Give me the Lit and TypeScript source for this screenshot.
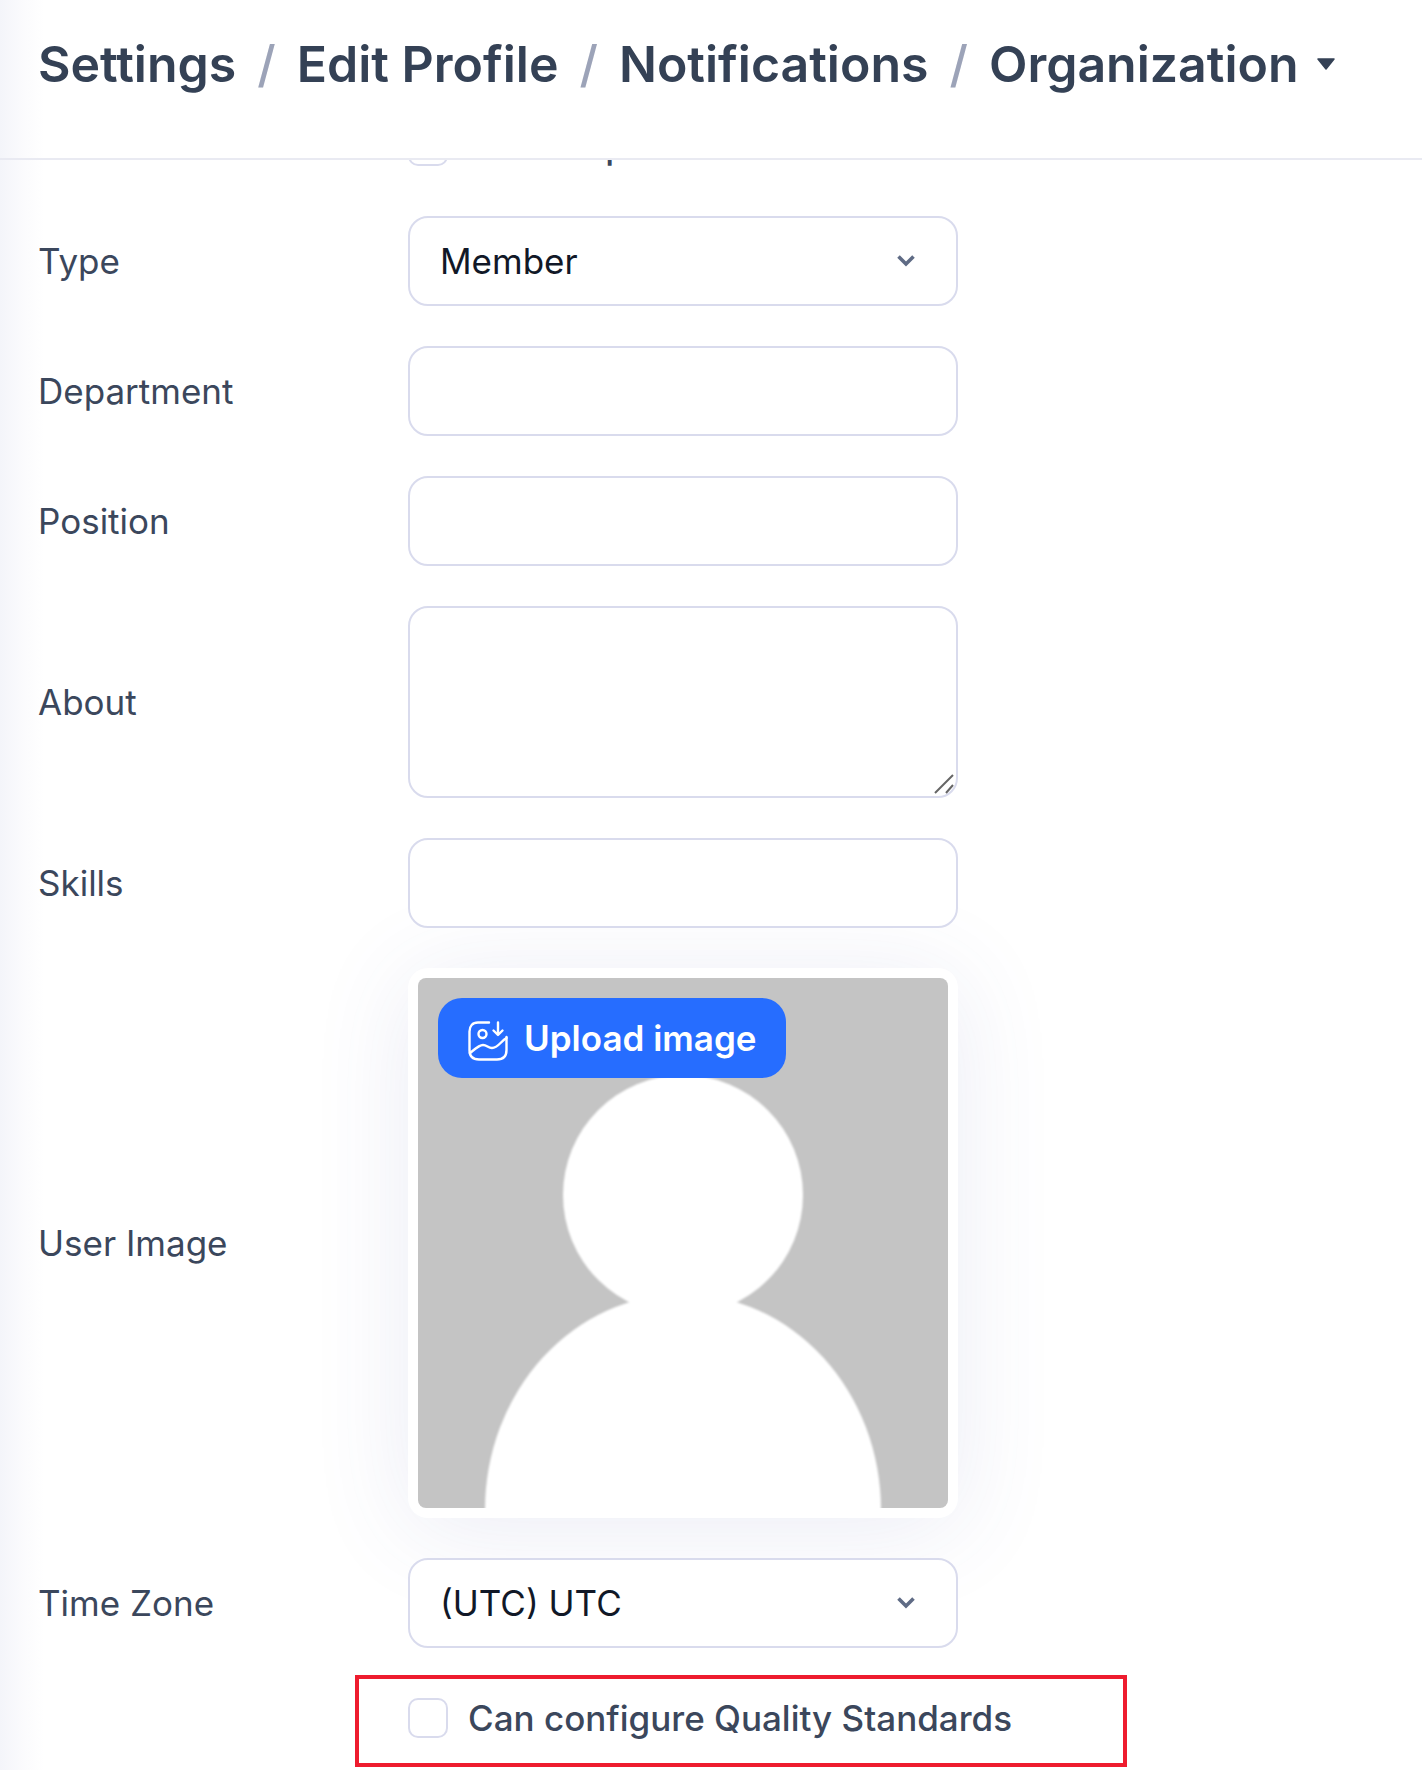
import { LitElement, html, css } from "lit";
import { customElement } from "lit/decorators.js";

const chevron = html`<svg class="chev" width="20" height="13" viewBox="0 0 20 13"><path d="M2.500 2.500l7.500 7.500 7.500-7.500" fill="none" stroke="#5f6b85" stroke-width="3.6"/></svg>`;

@customElement("app-root")
export class AppRoot extends LitElement {
  static styles = css`
    :host {
      display: block;
      height: 1770px;
      overflow: hidden;
      background: linear-gradient(90deg, #f4f5fa 0, #fbfbfd 24px, #fff 44px);
      font-family: Inter, "Liberation Sans", sans-serif;
      color: #374357;
      position: relative;
    }
    * { box-sizing: border-box; }
    header {
      height: 160px;
      border-bottom: 2px solid #e9eaf2;
      padding: 0 0 30px 38px;
      display: flex;
      align-items: center;
      gap: 21px;
      font-size: 50px;
      font-weight: 600;
      line-height: 1;
      color: #344155;
    }
    .sep { color: #9ca3b8; font-weight: 500; }
    .caret { margin-left: -3px; }
    .scroller { height: 1610px; overflow: hidden; position: relative; }
    form {
      margin-top: -44px;
      padding-left: 38px;
      display: grid;
      grid-template-columns: 370px 550px;
      row-gap: 40px;
      align-items: center;
      font-size: 35px;
    }
    .lbl { color: #3b475c; }
    .ctl { position: relative; display: block; }
    input.t, select, textarea {
      display: block;
      width: 100%;
      height: 90px;
      border: 2px solid #d9dbed;
      border-radius: 20px;
      background: #fff;
      font: inherit;
      color: #111827;
      padding: 0 30px;
      outline: none;
      appearance: none;
      margin: 0;
    }
    textarea { height: 192px; resize: none; padding: 20px 30px; }
    .chev { position: absolute; right: 42px; top: 38px; }
    .grip { position: absolute; left: 526px; top: 168px; }
    .check {
      grid-column: 2;
      height: 60px;
      display: flex;
      align-items: center;
      gap: 20px;
      white-space: nowrap;
      font-weight: 500;
      color: #3b475c;
    }
    .clipped span { word-spacing: 6px; }
    .box {
      width: 40px;
      height: 40px;
      flex: none;
      border: 2px solid #d9dbed;
      border-radius: 10px;
      background: #fff;
      appearance: none;
      margin: 0;
    }
    .card {
      height: 550px;
      padding: 10px;
      background: #fff;
      border-radius: 20px;
      box-shadow: 0 10px 100px rgba(70, 85, 160, 0.11);
    }
    .pic {
      position: relative;
      width: 530px;
      height: 530px;
      background: #c4c4c4;
      border-radius: 8px;
      overflow: hidden;
    }
    .pic svg.sil { display: block; filter: blur(0.8px); }
    .upload {
      position: absolute;
      left: 20px;
      top: 20px;
      height: 80px;
      width: 348px;
      border: 0;
      border-radius: 24px;
      background: #266dff;
      color: #fff;
      font: inherit;
      font-size: 35px;
      font-weight: 600;
      display: flex;
      align-items: center;
      gap: 16px;
      padding: 0 30px;
      white-space: nowrap;
    }
    .upload svg { flex: none; margin-top: 6px; }
    .red {
      position: absolute;
      left: 355px;
      top: 1515px;
      width: 772px;
      height: 92px;
      border: 4px solid #ee1c2e;
      pointer-events: none;
    }
  `;

  render() {
    return html`
      <header>
        <span>Settings</span><span class="sep">/</span>
        <span>Edit Profile</span><span class="sep">/</span>
        <span>Notifications</span><span class="sep">/</span>
        <span>Organization</span>
        <svg class="caret" width="18" height="12" viewBox="0 0 18 12"><path d="M1 1h16L9 11z" fill="#344155" stroke="#344155" stroke-width="1.500" stroke-linejoin="round"/></svg>
      </header>
      <div class="scroller">
        <form>
          <label class="check clipped"><input class="box" type="checkbox" /><span>Can Help</span></label>

          <label class="lbl">Type</label>
          <div class="ctl"><select><option>Member</option></select>${chevron}</div>

          <label class="lbl">Department</label>
          <div class="ctl"><input class="t" type="text" /></div>

          <label class="lbl">Position</label>
          <div class="ctl"><input class="t" type="text" /></div>

          <label class="lbl">About</label>
          <div class="ctl">
            <textarea></textarea>
            <svg class="grip" width="20" height="20" viewBox="0 0 20 20"><path d="M1 19L19 1M12 19l7-8" fill="none" stroke="#666" stroke-width="2"/></svg>
          </div>

          <label class="lbl">Skills</label>
          <div class="ctl"><input class="t" type="text" /></div>

          <label class="lbl">User Image</label>
          <div class="card">
            <div class="pic">
              <svg class="sil" width="530" height="560" viewBox="0 0 530 560">
                <circle cx="265" cy="217" r="120" fill="#fff" />
                <ellipse cx="265" cy="532" rx="198" ry="216" fill="#fff" />
                <rect x="228" y="300" width="74" height="40" fill="#fff" />
              </svg>
              <button class="upload" type="button">
                <svg width="40" height="40" viewBox="0 0 40 40" fill="none" stroke="#fff" stroke-width="2.400" stroke-linecap="round" stroke-linejoin="round">
                  <path d="M21 1.500H10C4.500 1.500 1.500 5 1.500 10.500V29C1.500 35 5 38.500 11 38.500H29C35 38.500 38.500 35 38.500 29V16" />
                  <circle cx="14.500" cy="13" r="4" />
                  <path d="M30 1.500V13.500M25.500 9.500L30 14L34.500 9.500" />
                  <path d="M2 32C7 28 11 24 15 24C19 24 20 27 24 27C30 27 33 20 38.500 17" />
                </svg>
                <span>Upload image</span>
              </button>
            </div>
          </div>

          <label class="lbl">Time Zone</label>
          <div class="ctl"><select><option>(UTC) UTC</option></select>${chevron}</div>

          <label class="check"><input class="box" type="checkbox" /><span>Can configure Quality Standards</span></label>
        </form>
        <div class="red"></div>
      </div>
    `;
  }
}
